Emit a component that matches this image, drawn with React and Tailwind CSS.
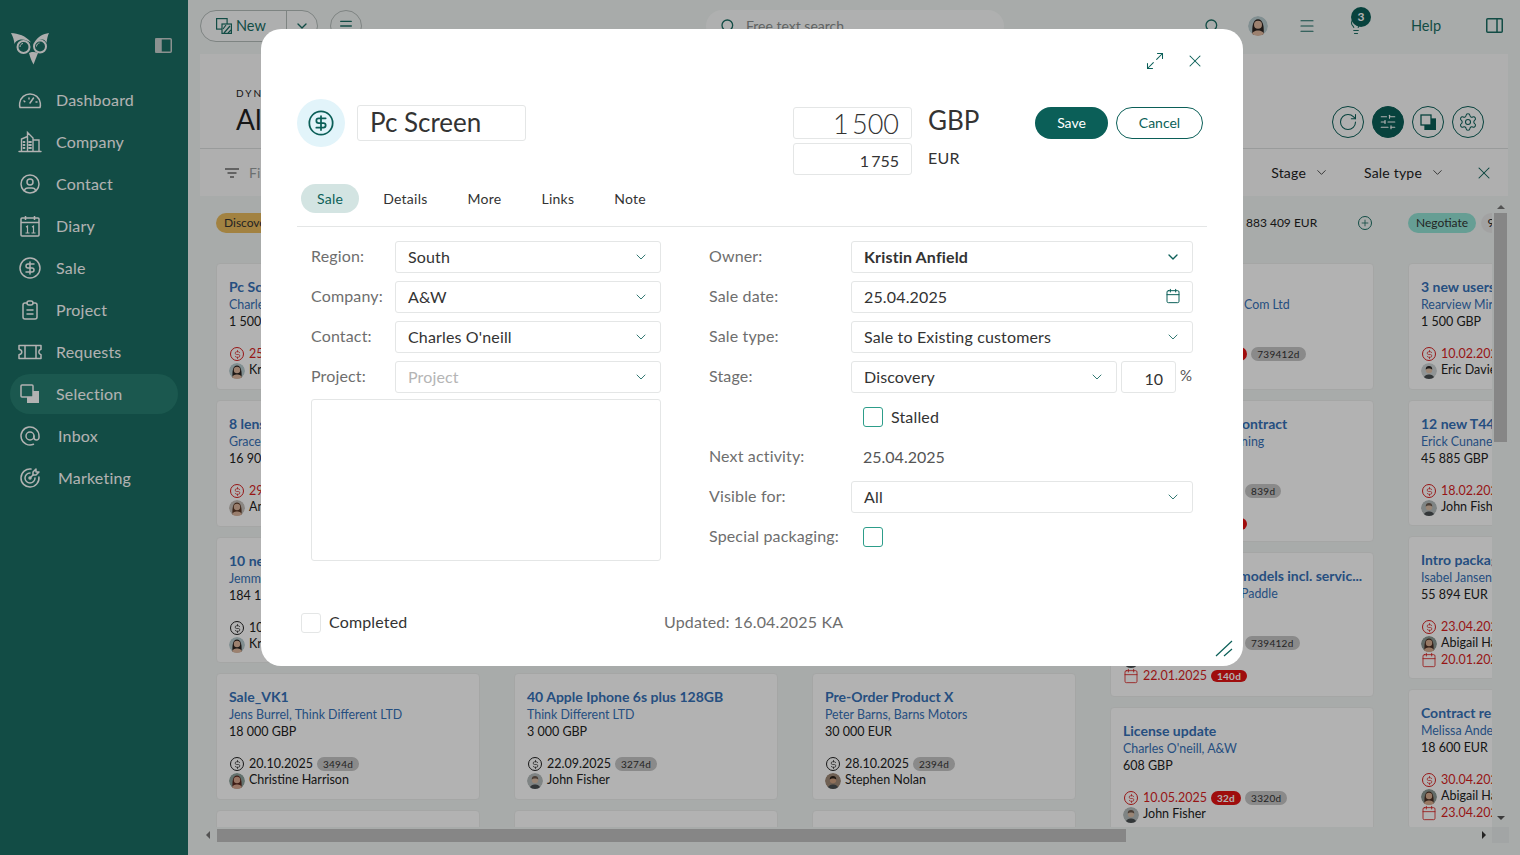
import React from 'react';
import { ChevronDown, CircleDollarSign, Maximize2, X, Plus, RotateCw, SlidersHorizontal, Settings, Search, Calendar, Lightbulb, Menu } from 'lucide-react';
import { TbAt, TbClipboardText, TbTargetArrow, TbUserCircle, TbCurrencyDollar } from 'react-icons/tb';

const Owl = () => (
  <svg width="38" height="32" viewBox="0 0 38 32" fill="#fafafa" className="ml-[11px]">
    <path d="M0 0C7 .5 15 2.500 20 9.500C17 7.500 13 6 9.500 6.500C6 7 4 9 3.500 11C3 7 2 3.500 0 0Z" />
    <path d="M38 0C32 1 27 3 23.500 9.500C26 7.500 29 6 32 6.500C34 7 35 8.500 35.500 10C36 6 36.500 3 38 0Z" />
    <circle cx="12.500" cy="14" r="6" fill="none" stroke="#fafafa" strokeWidth="2" />
    <circle cx="29" cy="13.500" r="6" fill="none" stroke="#fafafa" strokeWidth="2" />
    <path d="M9 14c0-2 1.500-3.500 3-3.500M25.500 13.500c0-2 1.500-3.500 3-3.500" fill="none" stroke="#fafafa" strokeWidth="1" />
    <path d="M18 20C20 18.500 24 18.500 27 20L22.500 31.500C20.500 28 19 24 18 20Z" />
  </svg>
);

const PanelIcon = ({ left }) => (
  <svg width="17" height="15" viewBox="0 0 17 15" fill="none" stroke="currentColor" strokeWidth="1.500">
    <rect x=".75" y=".75" width="15.500" height="13.500" rx="1" />
    {left ? <rect x="1" y="1" width="5" height="13" fill="currentColor" /> : <path d="M11 1v13" />}
  </svg>
);

const DashIcon = () => (
  <svg width="24" height="24" viewBox="0 0 24 24" fill="none" stroke="currentColor" strokeWidth="1.500" strokeLinejoin="round" strokeLinecap="round">
    <path d="M2 19.500h20c.5-1.500.5-3 .3-4.500C21.500 9.500 17 6 12 6S2.500 9.500 1.700 15c-.2 1.500-.2 3 .3 4.500Z" />
    <path d="M12 15l3.500-5M11 10v1M6 13l.8.6M18 14h1" />
  </svg>
);

const BuildingIcon = () => (
  <svg width="24" height="24" viewBox="0 0 24 24" fill="none" stroke="currentColor" strokeWidth="1.400" strokeLinecap="round">
    <path d="M1 21.500h22M3.500 21.500V9l6-2.500M9.500 21.500V2.500l0 0L15 8v13.500M15 10h6v11.500" />
    <path d="M5.500 12h1M5.500 15h1M11 12h2M11 15h2M11 18h2M5.500 18h1" strokeWidth="1.800" />
  </svg>
);

const DiaryIcon = () => (
  <svg width="24" height="24" viewBox="0 0 24 24" fill="none" stroke="currentColor" strokeWidth="1.500">
    <rect x="3" y="4" width="18" height="18" rx="1" />
    <path d="M3 8.500h18M7.500 2v4M16.500 2v4" />
    <path d="M8 13l1.500-1v7M7.500 19h4M14 13l1.500-1v7M13.500 19h4" strokeWidth="1.200" />
  </svg>
);

const TicketIcon = () => (
  <svg width="24" height="24" viewBox="0 0 24 24" fill="none" stroke="currentColor" strokeWidth="1.500" strokeLinejoin="round">
    <path d="M1 5.500h22v3.700c-1.500.5-2.200 1.600-2.200 2.800s.7 2.300 2.200 2.800v3.700H1v-3.700c2-.4 2.800-1.500 2.800-2.800S3 9.600 1 9.200V5.500Z" />
    <path d="M7 6v12M18 6v12" />
  </svg>
);

const SelectionIcon = ({ size = 20, fill = '#277f71' }) => (
  <svg width={size} height={size} viewBox="0 0 20 20" fill="none" stroke="currentColor" strokeWidth="1.500">
    <rect x="7" y="7" width="12" height="12" fill="currentColor" stroke="none" />
    <rect x="1" y="1" width="12" height="12" rx="1" fill={fill} />
  </svg>
);

const NewIcon = () => (
  <svg width="16" height="16" viewBox="0 0 16 16" fill="none" stroke="currentColor" strokeWidth="1.200">
    <rect x=".6" y=".6" width="10.500" height="10.500" />
    <rect x="6" y="6" width="9.400" height="9.400" fill="#f1f5f4" />
    <path d="M7 11l3-4M8 15l6-7M12 15l3-3" />
  </svg>
);

const navItems = [
  { label: 'Dashboard', icon: <DashIcon /> },
  { label: 'Company', icon: <BuildingIcon /> },
  { label: 'Contact', icon: <TbUserCircle size={24} strokeWidth={1.500} /> },
  { label: 'Diary', icon: <DiaryIcon /> },
  { label: 'Sale', icon: <CircleDollarSign size={24} strokeWidth={1.500} /> },
  { label: 'Project', icon: <TbClipboardText size={24} strokeWidth={1.500} /> },
  { label: 'Requests', icon: <TicketIcon /> },
  { label: 'Selection', icon: <SelectionIcon />, active: true },
  { label: 'Inbox', icon: <TbAt size={24} strokeWidth={1.500} />, shift: true },
  { label: 'Marketing', icon: <TbTargetArrow size={24} strokeWidth={1.500} />, shift: true },
];

const Sidebar = () => (
  <aside className="w-[188px] h-full shrink-0 bg-[#1a6e63] text-white flex flex-col">
    <div className="h-[33px]" />
    <div className="flex items-start justify-between pr-[16px]">
      <Owl />
      <div className="mt-[5px] text-[#c8d0ce]"><PanelIcon left /></div>
    </div>
    <nav className="mt-[15px] flex flex-col gap-[2px] px-[10px]">
      {navItems.map((item) => (
        <div key={item.label} className={`h-[40px] flex items-center rounded-full pl-[8px] ${item.active ? 'bg-[#277f71]' : ''}`}>
          <span className="w-[24px] h-[24px] flex items-center justify-center shrink-0">{item.icon}</span>
          <span className={`text-[16px] tracking-[.2px] ${item.shift ? 'ml-[16px]' : 'ml-[14px]'}`}>{item.label}</span>
        </div>
      ))}
    </nav>
  </aside>
);

const TopBar = () => (
  <div className="h-[54px] shrink-0 flex items-center pl-[12px] pb-[3px] text-[#1a6e63]">
    <div className="w-[118px] h-[32px] flex items-center rounded-full border border-[#b5bdbb] bg-white/60">
      <span className="ml-[15px] w-[16px] h-[16px]"><NewIcon /></span>
      <span className="ml-[4px] text-[14.500px] w-[50px]">New</span>
      <span className="h-full w-px bg-[#b5bdbb]" />
      <ChevronDown size={16} className="ml-[7px]" />
    </div>
    <div className="ml-[12px] w-[32px] h-[32px] rounded-full border border-[#b5bdbb] flex items-center justify-center">
      <Menu size={16} />
    </div>
    <div className="ml-[344px] w-[298px] h-[32px] rounded-full bg-white/70 flex items-center pl-[14px] text-[#8a8f8e]">
      <Search size={16} className="text-[#1a6e63]" />
      <span className="ml-[10px] text-[14px]">Free text search</span>
    </div>
    <Search size={16} className="ml-[200px]" />
    <span className="ml-[28px]"><Avatar size={20} bg="#b9cdd0" hair="#2b2420" skin="#e0b9a0" long /></span>
    <Menu size={18} strokeWidth={1.500} className="ml-[30px]" />
    <div className="ml-[31px] relative">
      <Lightbulb size={18} strokeWidth={1.500} />
      <span className="absolute -top-[10px] left-[4px] w-[20px] h-[20px] rounded-full bg-[#0b5f58] text-white text-[12px] font-bold flex items-center justify-center">3</span>
    </div>
    <span className="ml-[46px] text-[14.500px]">Help</span>
    <span className="ml-[45px]"><PanelIcon /></span>
  </div>
);

const CircleBtn = ({ active, children }) => (
  <span className={`w-[32px] h-[32px] rounded-full border border-[#0b5f58] flex items-center justify-center ${active ? 'bg-[#0b5f58] text-white' : 'text-[#0b5f58]'}`}>
    {children}
  </span>
);

const HeaderPanel = () => (
  <div className="mx-[12px] bg-[#fbfbfb] shrink-0 text-[#222]">
    <div className="h-[95px] border-b border-[#dcdfde] pl-[36px] flex items-start">
      <div className="pt-[33px]">
        <div className="text-[10px] tracking-[2px] leading-[12px]">DYNAMIC BOARD</div>
        <div className="text-[28px] leading-[36px] mt-[2px]">All sales</div>
      </div>
      <div className="ml-auto mt-[52px] mr-[24px] flex gap-[8px]">
        <CircleBtn><RotateCw size={20} strokeWidth={1.250} /></CircleBtn>
        <CircleBtn active><SlidersHorizontal size={18} strokeWidth={1.500} /></CircleBtn>
        <CircleBtn><svg width="16" height="16" viewBox="0 0 16 16" fill="none" stroke="currentColor" strokeWidth="1.300"><rect x="5" y="5" width="10.500" height="10.500" fill="currentColor" /><rect x="1" y="1" width="10" height="10" fill="#fbfbfb" /></svg></CircleBtn>
        <CircleBtn><Settings size={20} strokeWidth={1.250} /></CircleBtn>
      </div>
    </div>
    <div className="h-[47px] flex items-center pl-[25px] pr-[14px] text-[14px] tracking-[.2px]">
      <svg width="14" height="10" viewBox="0 0 14 10" fill="none" stroke="currentColor" strokeWidth="1.200"><path d="M0 1h14M2.500 5h9M5 9h4" /></svg>
      <span className="ml-[10px] text-[#9aa0a0]">Filter</span>
      <span className="ml-auto">Stage</span>
      <ChevronDown size={15} strokeWidth={1.250} className="ml-[8px]" />
      <span className="ml-[35px]">Sale type</span>
      <ChevronDown size={15} strokeWidth={1.250} className="ml-[8px]" />
      <X size={20} strokeWidth={1.250} className="ml-[29px] text-[#0b5f58]" />
    </div>
  </div>
);

const Avatar = ({ size = 16, bg = '#9aa5a8', hair = '#3a2e2a', skin = '#d9b8a0', long }) => (
  <svg width={size} height={size} viewBox="0 0 16 16" className="shrink-0 rounded-full">
    <circle cx="8" cy="8" r="8" fill={bg} />
    {long && <path d="M3.500 15C3 8 4 2.500 8 2.500S13 8 12.500 15Z" fill={hair} />}
    <path d="M2.500 16c.5-3.500 3-4.500 5.500-4.500s5 1 5.500 4.500Z" fill={long ? skin : '#4a4f52'} />
    <circle cx="8" cy="7" r="3.200" fill={skin} />
    {!long && <path d="M4.700 6.500C4.700 4 6 3 8 3s3.300 1 3.300 3.500C10 5 6 5 4.700 6.500Z" fill={hair} />}
  </svg>
);

const people = {
  kristin: { name: 'Kristin Anfield', bg: '#b9cdd0', hair: '#2b2420', skin: '#e0b9a0', long: true },
  grace: { name: 'Anna Green', bg: '#c7c2bc', hair: '#5c3a28', skin: '#dcb59c', long: true },
  christine: { name: 'Christine Harrison', bg: '#8da29c', hair: '#5a2a20', skin: '#d9a890', long: true },
  john: { name: 'John Fisher', bg: '#b7bdbd', hair: '#6b5a4e', skin: '#dcbfa8' },
  stephen: { name: 'Stephen Nolan', bg: '#a08a78', hair: '#2a2018', skin: '#d2a282' },
  eric: { name: 'Eric Davies', bg: '#cfd4d6', hair: '#2a2624', skin: '#e0c2aa' },
  abigail: { name: 'Abigail Hayes', bg: '#8d9a94', hair: '#4a3024', skin: '#d9ae90', long: true },
};

const Badge = ({ red, children }) => (
  <span className={`h-[14px] px-[6px] rounded-full text-[10px] leading-[14px] tracking-[.3px] ${red ? 'bg-[#e41313] text-white font-bold' : 'bg-[#c6c6c6] text-[#333]'}`}>{children}</span>
);

const Card = ({ h, title, titleIndent = 0, sub, subIndent = 0, amount, date, overdue, age, owner, extra, extraAge, dark }) => (
  <article className="w-full shrink-0 rounded-[4px] bg-white border border-[#eceeed] pl-[12px] pt-[14px] overflow-hidden" style={{ height: h }}>
    <div className="h-[18px] text-[14px] leading-[18px] font-bold text-[#3671b8] whitespace-nowrap" style={{ paddingLeft: titleIndent }}>{title}</div>
    <div className="h-[17px] text-[12.400px] leading-[17px] text-[#3671b8] whitespace-nowrap" style={{ paddingLeft: subIndent }}>{sub}</div>
    <div className="h-[17px] text-[12.500px] leading-[17px] text-[#222] whitespace-nowrap">{amount}</div>
    {date && (
      <>
        <div className={`mt-[16px] h-[16.500px] flex items-center text-[12.500px] whitespace-nowrap ${dark ? 'text-[#222]' : 'text-[#d81f1f]'}`}>
          <span className="ml-[1px] w-[14px] h-[14px] shrink-0 flex items-center justify-center rounded-full border border-current"><TbCurrencyDollar size={11} strokeWidth={1.500} /></span>
          <span className="ml-[5px]">{date}</span>
          <span className="ml-[4px] flex gap-[4px]">
            {overdue && <Badge red>{overdue}</Badge>}
            {age && <Badge>{age}</Badge>}
          </span>
        </div>
        {owner && (
          <div className="h-[16.500px] flex items-center text-[12.500px] text-[#222] whitespace-nowrap">
            <Avatar bg={people[owner].bg} hair={people[owner].hair} skin={people[owner].skin} long={people[owner].long} />
            <span className="ml-[4px]">{people[owner].name}</span>
          </div>
        )}
        {extra && (
          <div className="h-[16.500px] flex items-center text-[12.500px] text-[#d81f1f] whitespace-nowrap">
            <Calendar size={16} strokeWidth={1.250} className="shrink-0" />
            <span className="ml-[4px]">{extra}</span>
            {extraAge && <span className="ml-[4px]"><Badge red>{extraAge}</Badge></span>}
          </div>
        )}
      </>
    )}
  </article>
);

const columns = [
  {
    pill: 'Discovery', pillCls: 'bg-[#e8bb5e] text-[#333]',
    cards: [
      { h: 127, title: 'Pc Screen', sub: "Charles O'neill, A&W", amount: '1 500 GBP', date: '25.04.2025', owner: 'kristin' },
      { h: 127, title: '8 lenses', sub: 'Grace Hall, Optic', amount: '16 900 GBP', date: '29.03.2025', owner: 'grace' },
      { h: 126, title: '10 new units', sub: 'Jemma Scott', amount: '184 100 GBP', date: '10.10.2025', owner: 'kristin', dark: true },
      { h: 127, title: 'Sale_VK1', sub: 'Jens Burrel, Think Different LTD', amount: '18 000 GBP', date: '20.10.2025', age: '3494d', owner: 'christine', dark: true },
      { h: 60 },
    ],
  },
  {
    cards: [
      { h: 400 },
      { h: 127, title: '40 Apple Iphone 6s plus 128GB', sub: 'Think Different LTD', amount: '3 000 GBP', date: '22.09.2025', age: '3274d', owner: 'john', dark: true },
      { h: 60 },
    ],
  },
  {
    cards: [
      { h: 400 },
      { h: 127, title: 'Pre-Order Product X', sub: 'Peter Barns, Barns Motors', amount: '30 000 EUR', date: '28.10.2025', age: '2394d', owner: 'stephen', dark: true },
      { h: 60 },
    ],
  },
  {
    total: '883 409 EUR',
    cards: [
      { h: 127, sub: 'Com Ltd', subIndent: 121, amount: '', date: '12.01.2025', overdue: '140d', age: '739412d' },
      { h: 142, title: 'ontract', titleIndent: 119, sub: 'ning', subIndent: 118, date: '12.01.2025', overdue: '32d', age: '839d', extra: '22.01.2025', extraAge: '140d', owner: 'john' },
      { h: 145, title: 'models incl. servic...', titleIndent: 116, sub: 'Paddle', subIndent: 118, date: '12.01.2025', overdue: '32d', age: '739412d', owner: 'john', extra: '22.01.2025', extraAge: '140d' },
      { h: 130, title: 'License update', sub: "Charles O'neill, A&W", amount: '608 GBP', date: '10.05.2025', overdue: '32d', age: '3320d', owner: 'john' },
    ],
  },
  {
    pill: 'Negotiate', pillCls: 'bg-[#92e3d5] text-[#333]',
    cards: [
      { h: 127, title: '3 new users', sub: 'Rearview Mirrors', amount: '1 500 GBP', date: '10.02.2025', owner: 'eric' },
      { h: 126, title: '12 new T44', sub: 'Erick Cunane', amount: '45 885 GBP', date: '18.02.2025', owner: 'john' },
      { h: 143, title: 'Intro package', sub: 'Isabel Jansen', amount: '55 894 EUR', date: '23.04.2025', owner: 'abigail', extra: '20.01.2025' },
      { h: 140, title: 'Contract renewal', sub: 'Melissa Anderson', amount: '18 600 EUR', date: '30.04.2025', owner: 'abigail', extra: '23.04.2025' },
    ],
  },
];

const Board = () => (
  <div className="flex-1 min-h-0 flex ml-[12px] mr-[11px]">
    <div className="flex-1 min-w-0 overflow-hidden pl-[16px] pt-[17px]">
      <div className="flex gap-[34px] w-max">
        {columns.map((col, i) => (
          <div key={i} className="w-[264px] shrink-0">
            <div className="h-[20px] flex items-center text-[12px] text-[#222]">
              {col.pill && <span className={`h-[20px] px-[8px] rounded-full leading-[20px] ${col.pillCls}`}>{col.pill}</span>}
              {col.pill === 'Negotiate' && <span className="ml-[5px] w-[20px] h-[20px] rounded-full bg-[#e9e9e9] flex items-center justify-center">9</span>}
              {col.total && <span className="ml-[136px]">{col.total}</span>}
              {col.total && <span className="ml-[41px] w-[14px] h-[14px] rounded-full border border-[#1a6e63] text-[#1a6e63] flex items-center justify-center"><Plus size={10} /></span>}
            </div>
            <div className="mt-[30px] flex flex-col gap-[10px]">
              {col.cards.map((c, j) => <Card key={j} {...c} />)}
            </div>
          </div>
        ))}
      </div>
    </div>
    <div className="w-[17px] shrink-0 flex flex-col items-center pt-[9px]">
      <span className="w-0 h-0 border-x-[4px] border-x-transparent border-b-[4px] border-b-[#777]" />
      <span className="mt-[4px] w-[13px] h-[229px] bg-[#c0c0c0]" />
      <span className="mt-auto mb-[7px] w-0 h-0 border-x-[4px] border-x-transparent border-t-[4px] border-t-[#555]" />
    </div>
  </div>
);

const HScroll = () => (
  <div className="h-[16px] shrink-0 ml-[12px] mr-[11px] flex items-center relative mb-[12px]">
    <span className="ml-[6px] w-0 h-0 border-y-[4px] border-y-transparent border-r-[4px] border-r-[#777]" />
    <span className="ml-[7px] w-[909px] h-[13px] bg-[#c0c0c0]" />
    <span className="ml-[356px] w-0 h-0 border-y-[4px] border-y-transparent border-l-[4px] border-l-[#333]" />
    <span className="ml-auto w-[17px] h-full bg-[#e9ecec]" />
  </div>
);

const Input = ({ value, placeholder, bold, muted, chevron = true, strong, icon, className = '' }) => (
  <div className={`h-[32px] flex items-center rounded-[3px] border border-[#e4e6e6] pl-[12px] pr-[11px] text-[16px] tracking-[.15px] ${className}`}>
    <span className={`flex-1 ${bold ? 'font-bold text-[#333]' : muted ? 'text-[#b5b5b5]' : 'text-[#333]'}`}>{value || placeholder}</span>
    {icon}
    {chevron && !icon && <ChevronDown size={16} strokeWidth={strong ? 2 : 1.250} className="text-[#0b5f58] shrink-0" />}
  </div>
);

const Row = ({ label, w, children }) => (
  <div className="h-[32px] flex items-center">
    <span className={`shrink-0 text-[16px] tracking-[.15px] text-[#6e6e6e] pb-[2px] ${w}`}>{label}</span>
    <div className="flex-1 min-w-0">{children}</div>
  </div>
);

const Check = ({ green }) => (
  <span className={`block w-[20px] h-[20px] shrink-0 rounded-[3px] border ${green ? 'border-[#2d9d8a]' : 'border-[#e4e6e6]'}`} />
);

const tabs = ['Sale', 'Details', 'More', 'Links', 'Note'];

const SaleModal = () => (
  <div className="absolute left-[261px] top-[29px] w-[982px] h-[637px] rounded-[20px] bg-white text-[#333]">
    <div className="pt-[22px] pr-[38px] flex justify-end items-center gap-[20px] text-[#0b5f58]">
      <Maximize2 size={20} strokeWidth={1.250} />
      <X size={20} strokeWidth={1.250} />
    </div>
    <div className="mt-[28px] ml-[36px] flex items-start">
      <div className="w-[496px] flex items-start">
        <span className="w-[48px] h-[48px] rounded-full bg-[#e2f4fa] text-[#0b5f58] flex items-center justify-center">
          <CircleDollarSign size={28} strokeWidth={1.500} />
        </span>
        <div className="ml-[12px] mt-[6px] w-[169px] h-[36px] rounded-[3px] border border-[#e4e6e6] pl-[12px] text-[26px] leading-[33px] text-[#333]">Pc Screen</div>
      </div>
      <div className="pt-[8px] w-[119px] flex flex-col gap-[4px]">
        <div className="h-[32px] rounded-[3px] border border-[#e4e6e6] pr-[12px] text-right text-[27px] leading-[32px] font-light [word-spacing:-4px]">1 500</div>
        <div className="h-[32px] rounded-[3px] border border-[#e4e6e6] pr-[12px] text-right text-[16px] leading-[33px] [word-spacing:-2px]">1 755</div>
      </div>
      <div className="ml-[16px] w-[107px] pt-[8px] flex flex-col gap-[4px]">
        <div className="h-[28px] text-[26px] leading-[26px]">GBP</div>
        <div className="mt-[4px] h-[30px] text-[16px] leading-[30px] tracking-[.2px]">EUR</div>
      </div>
      <div className="pt-[8px] flex gap-[8px] text-[14px]">
        <span className="w-[73px] h-[32px] rounded-full bg-[#0b5f58] text-white flex items-center justify-center pb-px">Save</span>
        <span className="w-[87px] h-[32px] rounded-full border border-[#0b5f58] text-[#0b5f58] flex items-center justify-center pb-px">Cancel</span>
      </div>
    </div>
    <div className="mt-[9px] ml-[40px] flex gap-[8px] text-[14px] tracking-[.25px]">
      {tabs.map((t, i) => (
        <span key={t} className={`h-[29px] px-[16px] rounded-full leading-[30px] ${i === 0 ? 'bg-[#d3e4e2] text-[#0b5f58]' : 'text-[#333]'}`}>{t}</span>
      ))}
    </div>
    <div className="mt-[13px] ml-[36px] w-[910px] h-px bg-[#e4e6e6]" />
    <div className="mt-[14px] flex items-start">
      <div className="ml-[50px] w-[350px] flex flex-col gap-[8px]">
        <Row label="Region:" w="w-[84px]"><Input value="South" /></Row>
        <Row label="Company:" w="w-[84px]"><Input value="A&W" /></Row>
        <Row label="Contact:" w="w-[84px]"><Input value="Charles O'neill" /></Row>
        <Row label="Project:" w="w-[84px]"><Input placeholder="Project" muted /></Row>
        <div className="-mt-[2px] h-[162px] rounded-[3px] border border-[#e4e6e6]" />
      </div>
      <div className="ml-[48px] w-[484px] flex flex-col gap-[8px]">
        <Row label="Owner:" w="w-[142px]"><Input value="Kristin Anfield" bold strong /></Row>
        <Row label="Sale date:" w="w-[142px]"><Input value="25.04.2025" icon={<Calendar size={16} strokeWidth={1.500} className="text-[#0b5f58] -mt-[3px]" />} /></Row>
        <Row label="Sale type:" w="w-[142px]"><Input value="Sale to Existing customers" /></Row>
        <Row label="Stage:" w="w-[142px]">
          <div className="flex items-center">
            <Input value="Discovery" className="w-[266px]" />
            <div className="ml-[4px] w-[55px] h-[32px] rounded-[3px] border border-[#e4e6e6] pr-[12px] text-right text-[16px] leading-[33px]">10</div>
            <span className="ml-[4px] text-[15px] text-[#555] pb-[3px]">%</span>
          </div>
        </Row>
        <Row label="" w="w-[142px]">
          <div className="flex items-center pl-[12px] -mt-[1px]"><Check green /><span className="ml-[8px] text-[16px] tracking-[.15px]">Stalled</span></div>
        </Row>
        <Row label="Next activity:" w="w-[142px]"><span className="pl-[12px] text-[16px] text-[#555]">25.04.2025</span></Row>
        <Row label="Visible for:" w="w-[142px]"><Input value="All" /></Row>
        <Row label="Special packaging:" w="w-[142px]"><div className="pl-[12px]"><Check green /></div></Row>
      </div>
    </div>
    <div className="mt-[49px] ml-[40px] flex items-center text-[16px] tracking-[.15px]">
      <Check />
      <span className="ml-[8px] w-[335px] pb-px">Completed</span>
      <span className="text-[#6e6e6e] pb-px">Updated: 16.04.2025 KA</span>
    </div>
    <svg width="18" height="17" viewBox="0 0 18 17" fill="none" stroke="#0b5f58" strokeWidth="1.200" className="absolute left-[954px] top-[611px]">
      <path d="M1 16L17 1M9 16l8-7" />
    </svg>
  </div>
);

export default function App() {
  return (
    <div className="relative w-full h-screen overflow-hidden flex bg-[#f1f5f4] font-['Lato','Noto_Sans',sans-serif]">
      <Sidebar />
      <main className="flex-1 min-w-0 flex flex-col">
        <TopBar />
        <HeaderPanel />
        <Board />
        <HScroll />
      </main>
      <div className="absolute inset-0 bg-black/30" />
      <SaleModal />
    </div>
  );
}
